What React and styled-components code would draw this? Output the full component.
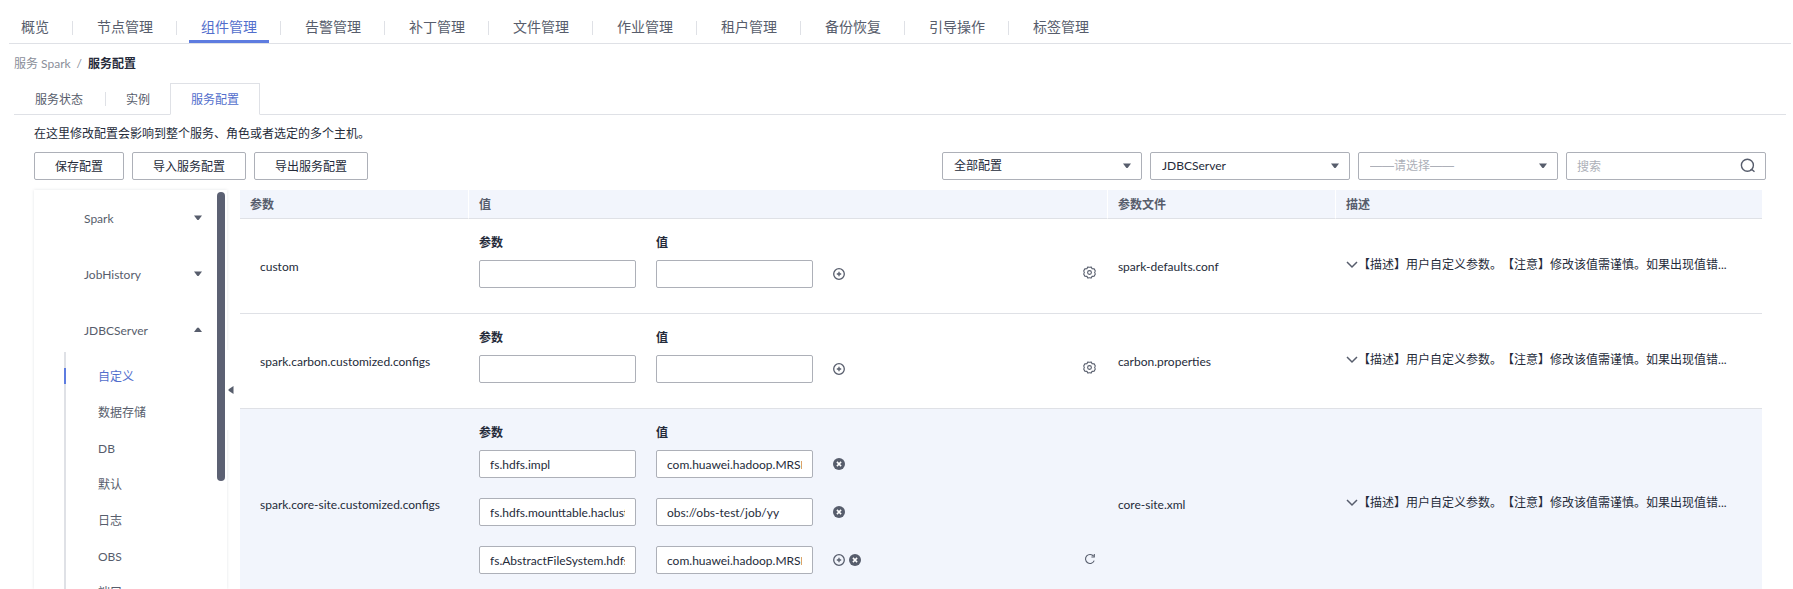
import React from "react";
import styled, { createGlobalStyle, css } from "styled-components";

const GlobalStyle = createGlobalStyle`
  *, *::before, *::after { box-sizing: border-box; }
  body {
    margin: 0;
    background: #fff;
    color: #252b3a;
    font: 12px/18px Lato, "Noto Sans CJK SC", sans-serif;
    text-spacing-trim: space-all;
  }
  button, input, select { font: inherit; color: inherit; }
  a { color: inherit; text-decoration: none; }
`;

const Page = styled.div`
  height: 100vh;
  overflow: hidden;
  display: flex;
  flex-direction: column;
  padding: 11px 2px 0 9px;
`;

/* Top navigation */
const MainNav = styled.nav`
  display: flex;
  flex: none;
  height: 33px;
  border-bottom: 1px solid #dfe1e6;
`;

const divider = css`
  content: "";
  width: 1px;
  height: 14px;
  background: #dfe1e6;
`;

const NavItem = styled.div`
  display: flex;
  height: 32px;
  &:not(:last-child)::after {
    ${divider}
    margin-top: 10px;
  }
`;

const NavLink = styled.a`
  margin: 0 11px 0 12px;
  padding: 2px 12px 0;
  font-size: 14px;
  line-height: 28px;
  white-space: nowrap;
  color: ${(p) => (p.$active ? "#526ecc" : "#575d6c")};
  border-bottom: 3px solid ${(p) => (p.$active ? "#5e7ce0" : "transparent")};
  ${NavItem}:first-child & {
    margin-left: 0;
  }
`;

/* Breadcrumb and second-level tabs */
const Content = styled.main`
  display: flex;
  flex-direction: column;
  flex: 1;
  min-height: 0;
  margin: 0 5px;
`;

const Breadcrumb = styled.nav`
  display: flex;
  gap: 6px;
  padding-top: 11px;
  color: #8a8e99;
  strong { color: #252b3a; }
`;

const Tabs = styled.div`
  display: flex;
  align-items: center;
  flex: none;
  height: 32px;
  margin-top: 10px;
  padding-left: 1px;
  box-shadow: inset 0 -1px #dfe1e6;
`;

const Tab = styled.button`
  height: 32px;
  padding: 2px 20px 0;
  border: 1px solid transparent;
  border-width: 1px 0;
  background: none;
  color: #575d6c;
  cursor: pointer;
  ${(p) =>
    p.$active &&
    css`
      color: #526ecc;
      background: #fff;
      border-width: 1px;
      border-color: #dfe1e6;
      border-bottom-color: #fff;
    `}
`;

const TabDivider = styled.span`
  ${divider}
  margin-left: 2px;
`;

const Panel = styled.section`
  display: flex;
  flex-direction: column;
  flex: 1;
  min-height: 0;
  padding: 10px 20px 0;
`;

const Hint = styled.p`
  margin: 0 0 9px;
`;

const Toolbar = styled.div`
  display: flex;
  justify-content: space-between;
  margin-bottom: 10px;
`;

const Group = styled.div`
  display: flex;
  gap: 8px;
`;

const Button = styled.button`
  height: 28px;
  padding: 2px 20px 0;
  border: 1px solid #adb0b8;
  border-radius: 2px;
  background: #fff;
  cursor: pointer;
`;

const Field = styled.div`
  position: relative;
  width: 200px;
  height: 28px;
  svg {
    position: absolute;
    right: ${(p) => p.$iconRight || 11}px;
    top: 50%;
    transform: translateY(-50%);
    pointer-events: none;
  }
`;

const control = css`
  height: 28px;
  border: 1px solid #adb0b8;
  border-radius: 2px;
  background: #fff;
  outline: none;
  &::placeholder { color: #adb0b8; opacity: 1; }
`;

const Select = styled.select`
  ${control}
  width: 100%;
  padding: 0 28px 0 11px;
  appearance: none;
  color: #252b3a;
  ${(p) =>
    p.$empty &&
    css`
      color: #adb0b8;
      font-family: "Liberation Sans", "Noto Sans CJK SC", sans-serif;
    `}
`;

const SearchInput = styled.input`
  ${control}
  width: 100%;
  padding: 0 36px 0 10px;
`;

/* Role tree */
const Workspace = styled.div`
  display: flex;
  flex: 1;
  min-height: 0;
`;

const Sidebar = styled.aside`
  display: flex;
  flex: none;
  width: 193px;
  overflow: hidden;
  padding-right: 2px;
  box-shadow: 0 0 3px rgba(37, 43, 58, 0.13);
`;

const Tree = styled.nav`
  flex: 1;
  padding-top: 6px;
`;

const Scrollbar = styled.div`
  width: 8px;
  height: 289px;
  margin-top: 2px;
  border-radius: 4px;
  background: #5c6173;
`;

const Role = styled.button`
  display: flex;
  align-items: center;
  justify-content: space-between;
  width: 100%;
  height: 44px;
  margin-bottom: ${(p) => (p.$open ? 0 : 12)}px;
  padding: 0 15px 0 50px;
  border: 0;
  background: none;
  color: #575d6c;
  cursor: pointer;
  span { padding-top: 2px; }
`;

const SubList = styled.ul`
  list-style: none;
  margin: 0 0 0 30px;
  padding: 6px 0 0;
  border-left: 2px solid #dfe1e6;
`;

const SubItem = styled.li`
  display: flex;
  align-items: center;
  height: 36px;
  margin-left: -2px;
  color: ${(p) => (p.$active ? "#526ecc" : "#575d6c")};
  &::before {
    content: "";
    width: 2px;
    height: 16px;
    margin-right: 32px;
    background: ${(p) => (p.$active ? "#5e7ce0" : "transparent")};
  }
  a { padding-top: 2px; }
`;

const Gutter = styled.div`
  flex: none;
  width: 13px;
  display: flex;
  align-items: center;
`;

const Collapse = styled.button`
  display: flex;
  align-items: center;
  width: 13px;
  height: 80px;
  padding: 0 0 0 1px;
  border: 0;
  background: #fff;
  z-index: 1;
  cursor: pointer;
`;

/* Parameter table */
const TableArea = styled.div`
  flex: 1;
  min-width: 0;
  overflow: hidden;
  margin-right: 4px;
`;

const Table = styled.table`
  width: 100%;
  table-layout: fixed;
  border-collapse: separate;
  border-spacing: 0;
`;

const Col = styled.col`
  width: ${(p) => p.$w};
`;

const Th = styled.th`
  height: 29px;
  padding: 2px 10px 0;
  text-align: left;
  font-weight: 700;
  color: #575d6c;
  background: #f2f5fc;
  border-bottom: 1px solid #dfe1e6;
  &:not(:last-child) { border-right: 1px solid #fff; }
`;

const Row = styled.tr`
  background: ${(p) => (p.$highlight ? "#f2f5fc" : "#fff")};
`;

const Td = styled.td`
  padding: 0 10px;
  vertical-align: middle;
  border-bottom: 1px solid #dfe1e6;
`;

const TextTd = styled(Td)`
  padding: 2px ${(p) => (p.$name ? 20 : 10)}px 0;
`;

const ValueCell = styled.div`
  display: flex;
  align-items: flex-end;
  justify-content: space-between;
  padding: 14px 2px 5px 0;
`;

const Pairs = styled.div`
  display: grid;
  grid-template-columns: 157px 157px auto;
  column-gap: 20px;
`;

const PairTitle = styled.strong`
  height: 27px;
  padding-top: 1px;
`;

const PairInput = styled.input`
  ${control}
  width: 100%;
  margin-bottom: 20px;
  padding: 0 10px;
`;

const Actions = styled.div`
  display: flex;
  align-items: center;
  gap: 4px;
  height: 28px;
`;

const IconButton = styled.button`
  display: flex;
  padding: 0;
  border: 0;
  background: none;
  color: #575d6c;
  cursor: pointer;
`;

const Setting = styled(IconButton)`
  margin-bottom: 29px;
`;

const Description = styled.div`
  display: flex;
  align-items: center;
  padding-bottom: 2px;
  white-space: nowrap;
`;

const Caret = ({ dir = "down" }) => {
  const d = {
    down: "M0 1.5h8L5 5.6a1.4 1.4 0 0 1-2 0z",
    up: "M0 6h8L5 1.9a1.4 1.4 0 0 0-2 0z",
    left: "M5.5 0v8L1 5a1.3 1.3 0 0 1 0-2z",
  }[dir];
  return (
    <svg width="8" height="8" viewBox="0 0 8 8" fill="#575d6c" aria-hidden="true">
      <path d={d} />
    </svg>
  );
};

const SearchIcon = () => (
  <svg width="16" height="16" viewBox="0 0 16 16" fill="none" stroke="#575d6c" strokeWidth="1.4" aria-hidden="true">
    <circle cx="7.4" cy="7.2" r="6" />
    <path d="M10.5 11.8h1.6l2.4 2" />
  </svg>
);

const PlusIcon = () => (
  <svg width="12" height="12" viewBox="0 0 12 12" fill="none" stroke="currentColor" strokeWidth="1.3">
    <circle cx="6" cy="6" r="5.3" />
    <path d="M6 3.8v4.4M3.8 6h4.4" />
  </svg>
);

const RemoveIcon = () => (
  <svg width="12" height="12" viewBox="0 0 12 12">
    <circle cx="6" cy="6" r="6" fill="currentColor" />
    <path d="M3.9 3.9l4.2 4.2M8.1 3.9L3.9 8.1" stroke="#fff" strokeWidth="1.5" />
  </svg>
);

const GearIcon = () => (
  <svg width="13" height="13" viewBox="0 0 13 13" fill="none" stroke="currentColor" strokeWidth="1.1">
    <path
      strokeLinejoin="round"
      d="M5 .9Q6.5 1.5 8 .9L9.1 2.6L11.3 2.9L12.3 5Q11 6.500 12.300 8L11.300 10.100L9.100 10.400L8 12.100Q6.500 11.500 5 12.100L3.900 10.400L1.700 10.100L.7 8Q2 6.500 .7 5L1.700 2.900L3.900 2.600z"
    />
    <circle cx="6.5" cy="6.5" r="1.9" />
  </svg>
);

const RefreshIcon = () => (
  <svg width="12" height="12" viewBox="0 0 12 12" fill="none" stroke="currentColor" strokeWidth="1.1">
    <path d="M10.2 7.6A4.5 4.5 0 1 1 9.6 3.2" />
    <path d="M10.3 1v3H7.4" />
  </svg>
);

const ChevronIcon = () => (
  <svg width="12" height="12" viewBox="0 0 12 12" fill="none" stroke="#575d6c" strokeWidth="1.5">
    <path d="M1 3l5 5 5-5" />
  </svg>
);

const NAV = ["概览", "节点管理", "组件管理", "告警管理", "补丁管理", "文件管理", "作业管理", "租户管理", "备份恢复", "引导操作", "标签管理"];
const ROLES = ["Spark", "JobHistory", "JDBCServer"];
const SUB = ["自定义", "数据存储", "DB", "默认", "日志", "OBS", "端口"];
const FILTERS = [
  { label: "配置范围", value: "全部配置" },
  { label: "角色", value: "JDBCServer" },
  { label: "主机", value: "——请选择——", empty: true },
];
const PARAMS = [
  { name: "custom", file: "spark-defaults.conf", pairs: [["", ""]] },
  { name: "spark.carbon.customized.configs", file: "carbon.properties", pairs: [["", ""]] },
  {
    name: "spark.core-site.customized.configs",
    file: "core-site.xml",
    modified: true,
    pairs: [
      ["fs.hdfs.impl", "com.huawei.hadoop.MRSHDFSWrapperFileSystem"],
      ["fs.hdfs.mounttable.hacluster", "obs://obs-test/job/yy"],
      ["fs.AbstractFileSystem.hdfs.impl", "com.huawei.hadoop.MRSHDFSWrapper"],
    ],
  },
];
const DESCRIPTION = "【描述】用户自定义参数。【注意】修改该值需谨慎。如果出现值错...";

const PairRow = ({ pair, last, filled }) => (
  <>
    <PairInput aria-label="参数" defaultValue={pair[0]} />
    <PairInput aria-label="值" defaultValue={pair[1]} />
    <Actions>
      {last && (
        <IconButton aria-label="添加">
          <PlusIcon />
        </IconButton>
      )}
      {filled && (
        <IconButton aria-label="删除">
          <RemoveIcon />
        </IconButton>
      )}
    </Actions>
  </>
);

const ParamRow = ({ item }) => (
  <Row $highlight={item.modified}>
    <TextTd $name>{item.name}</TextTd>
    <Td>
      <ValueCell>
        <Pairs>
          <PairTitle>参数</PairTitle>
          <PairTitle>值</PairTitle>
          <span />
          {item.pairs.map((pair, i) => (
            <PairRow key={i} pair={pair} last={i === item.pairs.length - 1} filled={item.modified} />
          ))}
        </Pairs>
        <Setting aria-label={item.modified ? "恢复" : "设置"}>
          {item.modified ? <RefreshIcon /> : <GearIcon />}
        </Setting>
      </ValueCell>
    </Td>
    <TextTd>{item.file}</TextTd>
    <Td>
      <Description>
        <IconButton aria-label="展开">
          <ChevronIcon />
        </IconButton>
        <span>{DESCRIPTION}</span>
      </Description>
    </Td>
  </Row>
);

export default function App() {
  return (
    <Page>
      <GlobalStyle />
      <MainNav>
        {NAV.map((label) => (
          <NavItem key={label}>
            <NavLink href="#" $active={label === "组件管理"}>
              {label}
            </NavLink>
          </NavItem>
        ))}
      </MainNav>
      <Content>
        <Breadcrumb>
          <a href="#">服务 Spark</a>
          <span>/</span>
          <strong>服务配置</strong>
        </Breadcrumb>
        <Tabs>
          <Tab>服务状态</Tab>
          <TabDivider />
          <Tab>实例</Tab>
          <Tab $active>服务配置</Tab>
        </Tabs>
        <Panel>
          <Hint>在这里修改配置会影响到整个服务、角色或者选定的多个主机。</Hint>
          <Toolbar>
            <Group>
              <Button>保存配置</Button>
              <Button>导入服务配置</Button>
              <Button>导出服务配置</Button>
            </Group>
            <Group>
              {FILTERS.map((f) => (
                <Field key={f.label}>
                  <Select aria-label={f.label} $empty={f.empty}>
                    <option>{f.value}</option>
                  </Select>
                  <Caret />
                </Field>
              ))}
              <Field $iconRight={10}>
                <SearchInput aria-label="搜索" placeholder="搜索" />
                <SearchIcon />
              </Field>
            </Group>
          </Toolbar>
          <Workspace>
            <Sidebar>
              <Tree>
                {ROLES.map((role) => {
                  const open = role === "JDBCServer";
                  return (
                    <Role key={role} $open={open} aria-expanded={open}>
                      <span>{role}</span>
                      <Caret dir={open ? "up" : "down"} />
                    </Role>
                  );
                })}
                <SubList>
                  {SUB.map((s, i) => (
                    <SubItem key={s} $active={i === 0}>
                      <a href="#">{s}</a>
                    </SubItem>
                  ))}
                </SubList>
              </Tree>
              <Scrollbar />
            </Sidebar>
            <Gutter>
              <Collapse aria-label="收起">
                <Caret dir="left" />
              </Collapse>
            </Gutter>
            <TableArea>
              <Table>
                <colgroup>
                  <Col $w="229px" />
                  <Col $w="42%" />
                  <Col $w="15%" />
                  <Col $w="28%" />
                </colgroup>
                <thead>
                  <tr>
                    <Th>参数</Th>
                    <Th>值</Th>
                    <Th>参数文件</Th>
                    <Th>描述</Th>
                  </tr>
                </thead>
                <tbody>
                  {PARAMS.map((p) => (
                    <ParamRow key={p.name} item={p} />
                  ))}
                </tbody>
              </Table>
            </TableArea>
          </Workspace>
        </Panel>
      </Content>
    </Page>
  );
}
